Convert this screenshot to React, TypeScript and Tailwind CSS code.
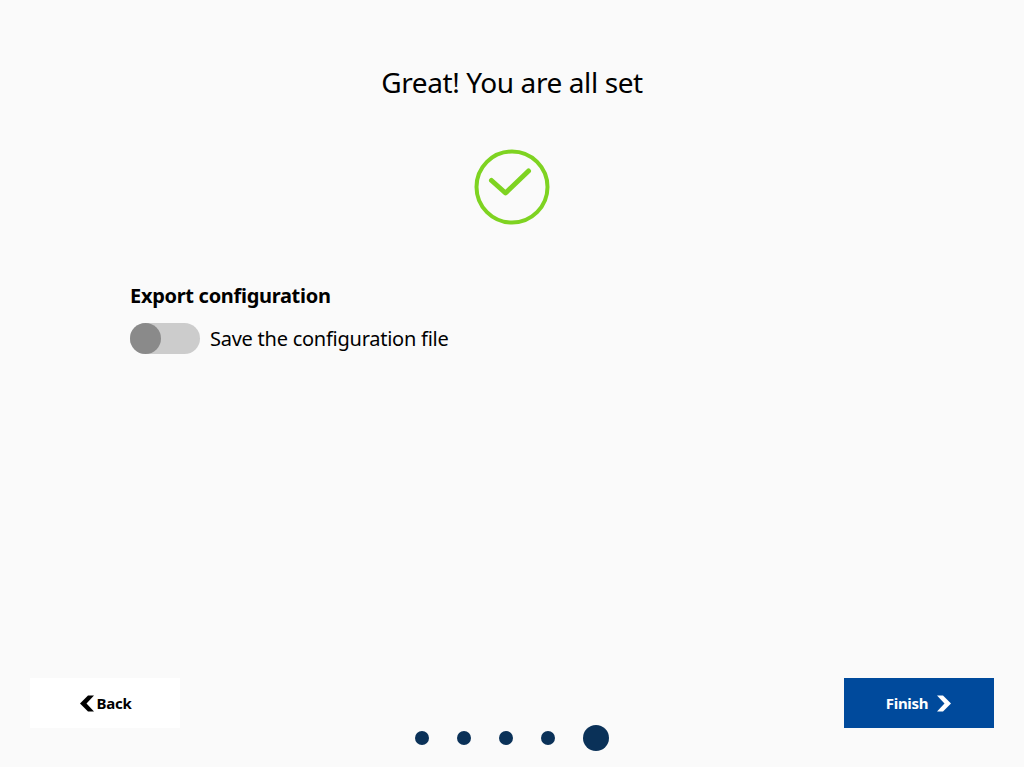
const font = { fontFamily: '"Open Sans", "Noto Sans", sans-serif' };

function CheckCircle() {
  return (
    <svg width="76" height="76" viewBox="0 0 76 76" fill="none" stroke="#7ed321" strokeLinecap="round" strokeLinejoin="round">
      <circle cx="38" cy="38" r="35.5" strokeWidth="4" />
      <path d="M17.5 31.5 L31.5 44 L54.5 22" strokeWidth="5" transform="translate(0 0)" />
    </svg>
  );
}

function Chevron({ left }: { left?: boolean }) {
  return (
    <svg width="16" height="17" viewBox="0 0 16 17" fill="currentColor">
      {left ? (
        <path d="M9 0.5 L15 0.5 L7.5 8.5 L15 16.5 L9 16.5 L1 8.5 Z" />
      ) : (
        <path d="M7 0.5 L1 0.5 L8.5 8.5 L1 16.5 L7 16.5 L15 8.5 Z" />
      )}
    </svg>
  );
}

export default function App() {
  return (
    <div className="flex h-[767px] flex-col bg-[#fafafa] text-black">
      <h1 className="pt-[62px] text-center text-[28px] leading-[40px] tracking-[-0.4px]">
        Great! You are all set
      </h1>

      <div className="mt-[47px] flex justify-center">
        <CheckCircle />
      </div>

      <div className="mt-[58px] px-[130px]">
        <h2 className="text-[20px] leading-[26px] font-bold tracking-[-0.3px]">Export configuration</h2>
        <div className="mt-[14px] flex items-center gap-[10px]">
          <div className="h-[31px] w-[70px] rounded-full bg-[#cccccc]">
            <div className="h-[31px] w-[31px] rounded-full bg-[#8a8a8a]" />
          </div>
          <span className="text-[20px] leading-[31px] tracking-[-0.25px]">Save the configuration file</span>
        </div>
      </div>

      <div className="mt-auto flex justify-between px-[30px]">
        <button type="button" className="flex h-[50px] w-[150px] items-center justify-center gap-[2px] bg-white text-[15px] font-bold tracking-[-0.3px]">
          <Chevron left />
          Back
        </button>
        <button type="button" className="flex h-[50px] w-[150px] items-center justify-center gap-[8px] bg-[#004a9c] text-[15px] font-bold tracking-[-0.3px] text-white">
          Finish
          <Chevron />
        </button>
      </div>

      <div className="mt-[-3px] mb-[16px] flex items-center justify-center gap-[28px]">
        <span className="size-[14px] rounded-full bg-[#0a3158]" />
        <span className="size-[14px] rounded-full bg-[#0a3158]" />
        <span className="size-[14px] rounded-full bg-[#0a3158]" />
        <span className="size-[14px] rounded-full bg-[#0a3158]" />
        <span className="size-[26px] rounded-full bg-[#0a3158]" />
      </div>
    </div>
  );
}

export { font };
